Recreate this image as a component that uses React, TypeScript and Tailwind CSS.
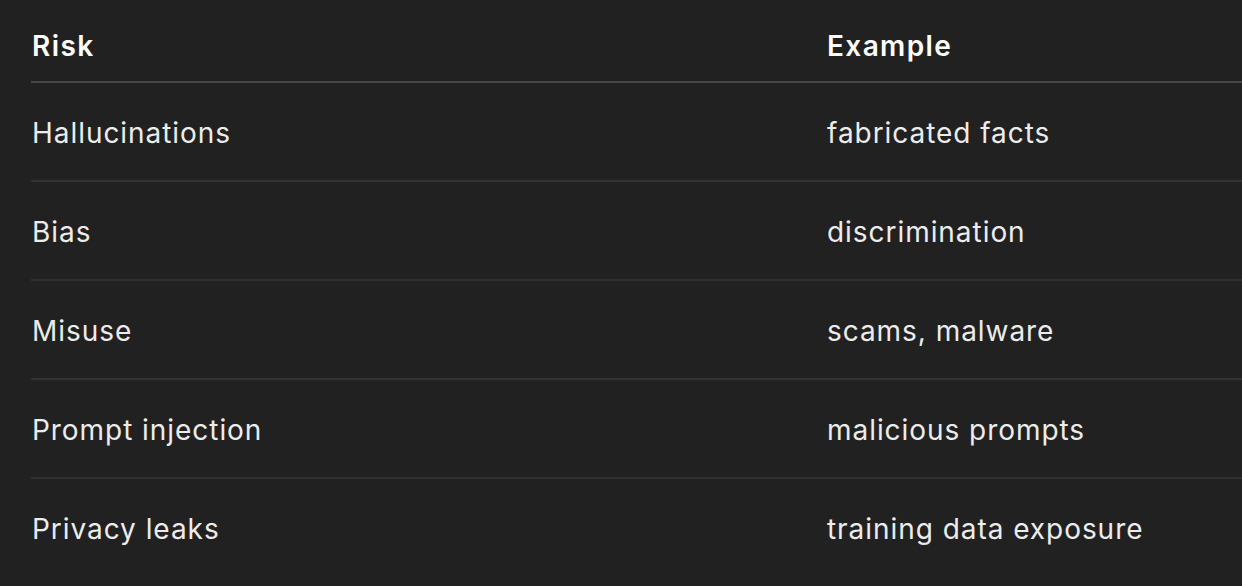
import React from "react";

const rows = [
  { risk: "Hallucinations", example: "fabricated facts" },
  { risk: "Bias", example: "discrimination" },
  { risk: "Misuse", example: "scams, malware" },
  { risk: "Prompt injection", example: "malicious prompts" },
  { risk: "Privacy leaks", example: "training data exposure" },
];

export default function App() {
  return (
    <div
      className="w-full min-h-screen bg-[#212121] text-[#ececec] overflow-hidden"
      style={{ fontFamily: "Inter, 'Noto Sans', sans-serif" }}
    >
      <div className="ml-[31px]">
        {/* Header */}
        <div className="flex items-center h-[83px] pt-[10px] border-b-2 border-[#474747] text-[28px] font-semibold tracking-[1.4px] text-white">
          <div className="w-[796px] pl-[1px]">Risk</div>
          <div className="flex-1">Example</div>
        </div>

        {/* Body rows */}
        {rows.map((r, i) => {
          const last = i === rows.length - 1;
          return (
            <div
              key={r.risk}
              className={`flex items-center pt-[3px] text-[28px] tracking-[0.95px] ${
                last ? "h-[96px]" : "h-[99px] border-b-2 border-[#303030]"
              }`}
            >
              <div className="w-[796px] pl-[1px]">{r.risk}</div>
              <div className="flex-1">{r.example}</div>
            </div>
          );
        })}
      </div>
    </div>
  );
}
